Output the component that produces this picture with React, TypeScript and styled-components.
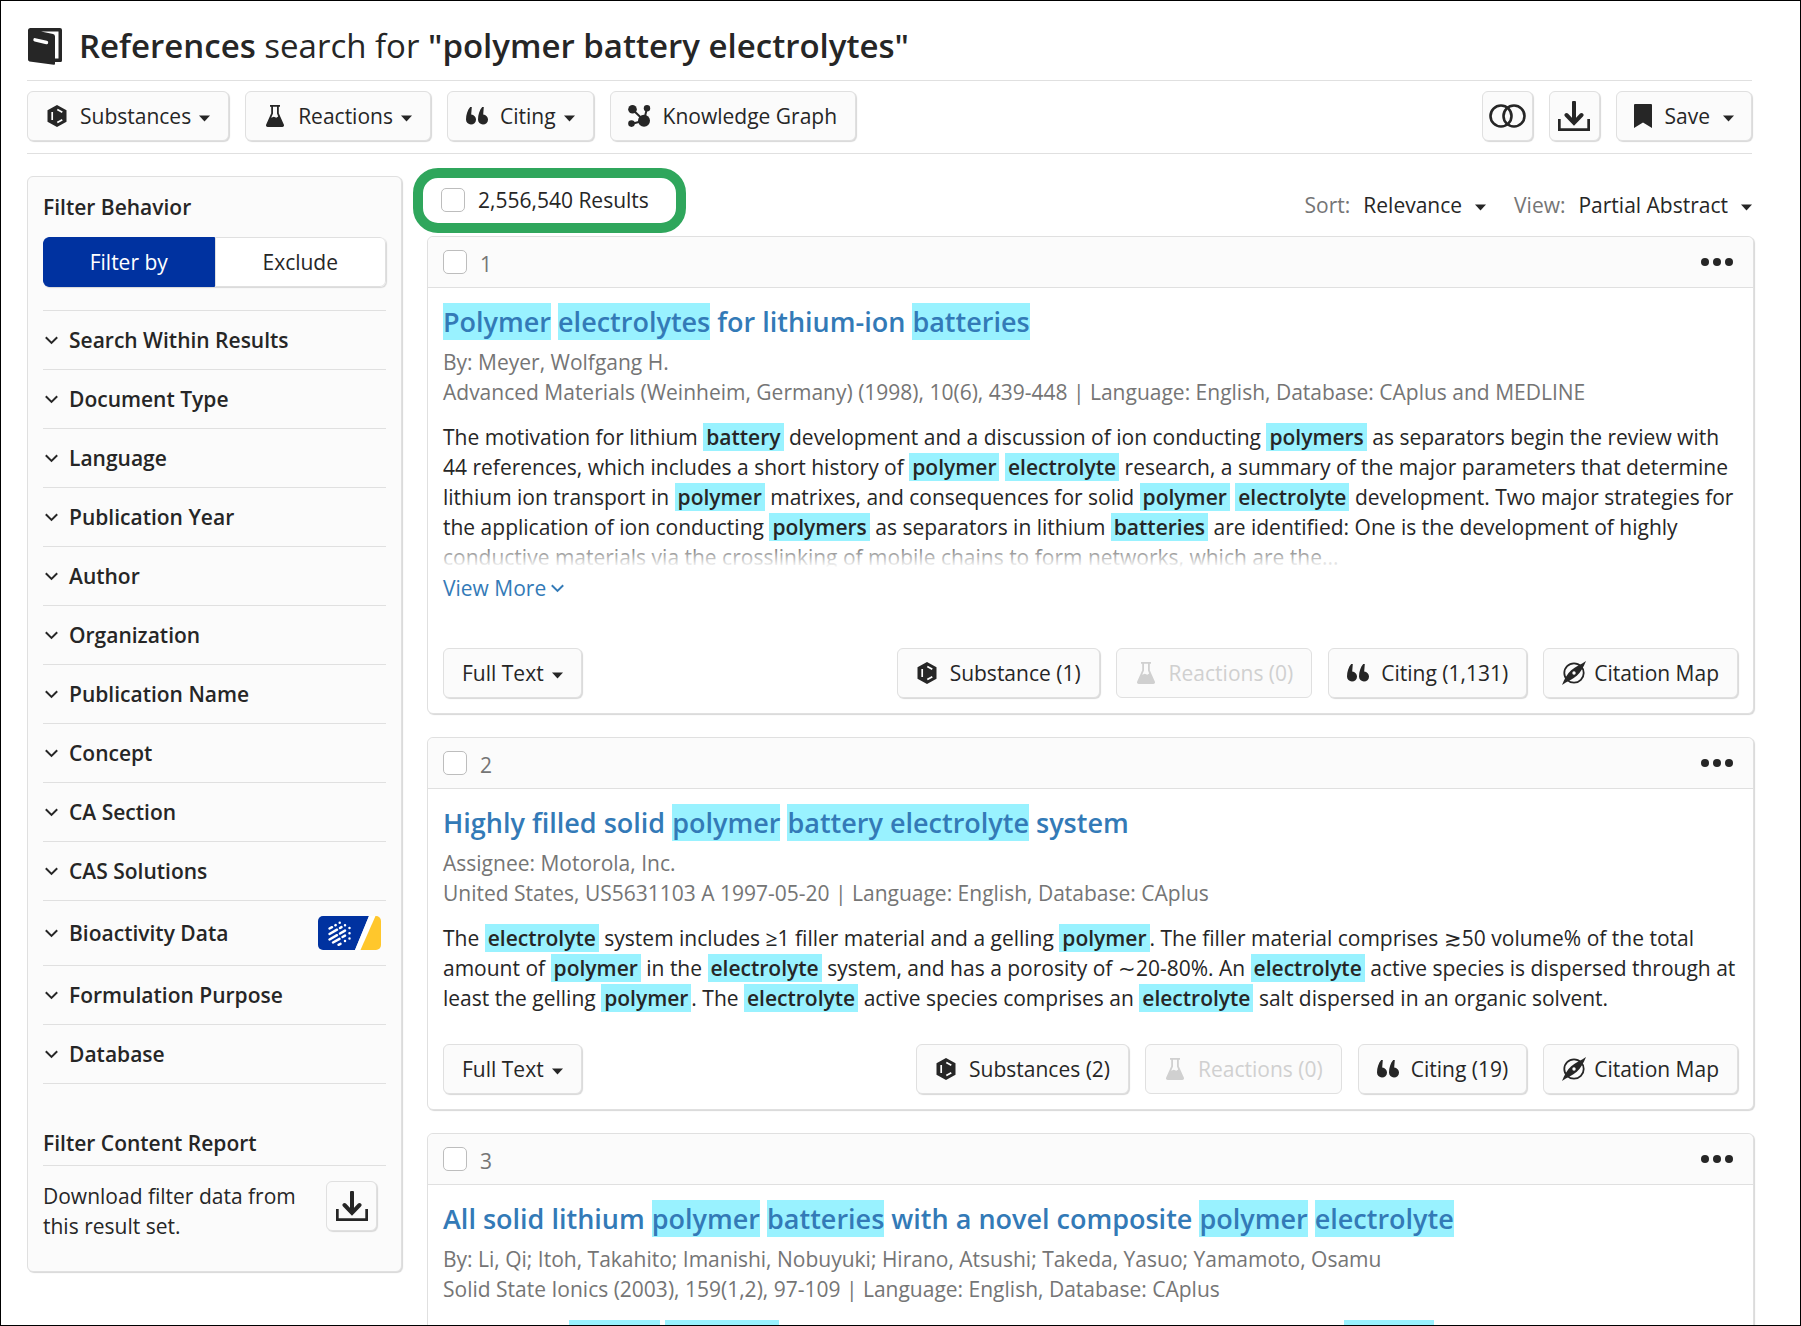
import React, { useState } from "react";
import styled, { createGlobalStyle, css } from "styled-components";

const ink = "#262626";
const muted = "#757575";
const line = "#e0e0e0";
const panel = "#fbfbfb";
const link = "#337ab7";
const brand = "#0032a0";

const GlobalStyle = createGlobalStyle`
  *, *::before, *::after { box-sizing: border-box; }
  body {
    margin: 0;
    background: #fff;
    color: ${ink};
    font: 400 21px/30px "Open Sans", "Noto Sans", sans-serif;
  }
  button, select, input { font: inherit; color: inherit; }
  h1, h2, h3, p, ul { margin: 0; padding: 0; }
  svg { display: block; flex: none; }
`;

const Page = styled.div`
  height: 100vh;
  overflow: hidden;
  border: 1px solid #000;
  padding: 12px 48px 0 26px;
`;

const TitleBar = styled.header`
  display: flex;
  align-items: center;
  gap: 17px;
  height: 68px;
  padding-left: 1px;
  border-bottom: 1px solid ${line};
`;

const Title = styled.h1`
  padding-bottom: 2px;
  font-size: 33px;
  line-height: 44px;
  font-weight: 400;
  strong { font-weight: 600; }
`;

const Toolbar = styled.div`
  display: flex;
  align-items: center;
  gap: 16px;
  height: 73px;
  padding-bottom: 2px;
  border-bottom: 1px solid ${line};
`;

const Spacer = styled.span`
  flex: 1;
`;

const Button = styled.button<{ $square?: boolean; $roomy?: boolean }>`
  display: inline-flex;
  align-items: center;
  justify-content: center;
  gap: ${(p) => (p.$roomy ? 13 : 8)}px;
  height: 50px;
  padding: 0 ${(p) => (p.$roomy ? 17 : 18)}px;
  border: 1px solid ${line};
  border-radius: 6px;
  background: ${panel};
  box-shadow: 1px 1px 1px #d8d8d8;
  white-space: nowrap;
  ${(p) => p.$square && css`width: 51px; padding: 0; flex: none;`}
  &:disabled {
    color: #d0d0d0;
    box-shadow: none;
  }
`;

const ButtonIcon = styled.span`
  display: inline-flex;
  justify-content: center;
  width: 22px;
  margin-right: 4px;
`;

const Columns = styled.div`
  display: grid;
  grid-template-columns: 375px minmax(0, 1fr);
  column-gap: 25px;
  align-items: start;
  margin-right: -2px;
  padding-top: 22px;
`;

const Sidebar = styled.aside`
  padding: 15px;
  border: 1px solid ${line};
  border-radius: 6px;
  background: ${panel};
  box-shadow: 1px 1px 1px #d8d8d8;
`;

const SideHeading = styled.h2`
  font-size: 21px;
  line-height: 30px;
  font-weight: 600;
`;

const Toggle = styled.div`
  display: grid;
  grid-template-columns: 1fr 1fr;
  height: 50px;
  margin: 15px 0 23px;
  border-radius: 6px;
  overflow: hidden;
  box-shadow: 1px 1px 1px #d8d8d8;
`;

const ToggleButton = styled.button<{ $on: boolean }>`
  border: 1px solid ${(p) => (p.$on ? brand : line)};
  border-radius: ${(p) => (p.$on ? "6px 0 0 6px" : "0 6px 6px 0")};
  background: ${(p) => (p.$on ? brand : "#fff")};
  color: ${(p) => (p.$on ? "#fff" : ink)};
`;

const FilterList = styled.ul`
  list-style: none;
  border-top: 1px solid ${line};
`;

const FilterItem = styled.li`
  border-bottom: 1px solid ${line};
`;

const FilterButton = styled.button`
  display: flex;
  align-items: center;
  gap: 11px;
  width: 100%;
  padding: 14px 5px 14px 2px;
  border: 0;
  background: none;
  font-weight: 600;
  text-align: left;
`;

const FilterName = styled.span`
  flex: 1;
`;

const Report = styled.section`
  margin-top: 44px;
  padding-bottom: 15px;
`;

const ReportTitle = styled(SideHeading)`
  padding-bottom: 7px;
  border-bottom: 1px solid ${line};
`;

const ReportBody = styled.div`
  display: flex;
  justify-content: space-between;
  align-items: flex-start;
  padding: 15px 9px 0 0;
`;

const Main = styled.main`
  display: flex;
  flex-direction: column;
`;

const ResultsBar = styled.div`
  position: relative;
  display: flex;
  align-items: center;
  height: 60px;
  padding: 0 2px 12px 14px;
`;

const Callout = styled.span`
  position: absolute;
  left: -14px;
  top: -8px;
  width: 273px;
  height: 65px;
  border: 10px solid #2fa65c;
  border-radius: 25px;
  pointer-events: none;
`;

const CheckLabel = styled.label`
  display: inline-flex;
  align-items: center;
  gap: 13px;
`;

const RowNumber = styled.span`
  padding-top: 4px;
  color: ${muted};
`;

const Check = styled.input.attrs({ type: "checkbox" })`
  appearance: none;
  width: 24px;
  height: 24px;
  margin: 0;
  border: 1px solid #bdbdbd;
  border-radius: 5px;
  background: #fff;
  &:checked { background: ${brand}; }
`;

const Field = styled.label`
  display: inline-flex;
  align-items: center;
  gap: 13px;
  margin-left: 28px;
  padding-top: 10px;
  color: ${muted};
`;

const SelectWrap = styled.span`
  display: inline-flex;
  align-items: center;
  gap: 13px;
  color: ${ink};
`;

const Select = styled.select`
  appearance: none;
  field-sizing: content;
  padding: 0;
  border: 0;
  background: none;
`;

const Card = styled.article`
  margin-bottom: 23px;
  border: 1px solid ${line};
  border-radius: 6px;
  background: #fff;
  box-shadow: 1px 1px 1px #d8d8d8;
`;

const CardHead = styled.div`
  display: flex;
  align-items: center;
  justify-content: space-between;
  height: 51px;
  padding: 0 20px 0 15px;
  border-bottom: 1px solid ${line};
  border-radius: 6px 6px 0 0;
  background: ${panel};
`;

const MoreButton = styled.button`
  padding: 8px 0;
  border: 0;
  background: none;
`;

const CardBody = styled.div`
  padding: 15px;
`;

const CardTitle = styled.h3`
  margin-bottom: 7px;
  font-size: 27px;
  line-height: 37px;
  font-weight: 600;
  a { color: ${link}; text-decoration: none; }
  mark { background: #99f2ff; color: inherit; }
`;

const Meta = styled.p`
  color: ${muted};
`;

const Abstract = styled.p<{ $faded?: boolean }>`
  position: relative;
  margin-top: 15px;
  mark {
    padding: 0 3px;
    background: #99f2ff;
    color: inherit;
    font-weight: 600;
  }
  ${(p) => p.$faded && css`
    &::after {
      content: "";
      position: absolute;
      inset: auto 0 0 0;
      height: 30px;
      background: linear-gradient(rgba(255, 255, 255, 0.2), #fff 85%);
    }
  `}
`;

const ViewMore = styled.a`
  display: flex;
  align-items: center;
  gap: 5px;
  width: fit-content;
  margin-top: 1px;
  color: ${link};
  text-decoration: none;
`;

const Actions = styled.div<{ $loose?: boolean }>`
  display: flex;
  gap: 16px;
  margin-top: ${(p) => (p.$loose ? 45 : 31)}px;
`;

const CaretSvg = styled.svg`
  margin-top: 4px;
`;

const Caret = () => (
  <CaretSvg width="11" height="7" viewBox="0 0 11 7" fill="currentColor" aria-hidden="true">
    <path d="M0 .5h11L5.500 6.500z" />
  </CaretSvg>
);

const Chevron = () => (
  <svg width="13" height="13" viewBox="0 0 13 13" fill="none" stroke="currentColor" strokeWidth="2" aria-hidden="true">
    <path d="M.8 3.300l5.700 5.600 5.700-5.600" />
  </svg>
);

const BookIcon = () => (
  <svg width="34" height="37" viewBox="0 0 34 37" aria-hidden="true">
    <path d="M2.500 0H32a2 2 0 0 1 2 2v30.500a1.500 1.500 0 0 1-1.500 1.500H27v1.700a1 1 0 0 1-1.200 1L1.500 33.500A2 2 0 0 1 0 31.600V2.500A2.500 2.500 0 0 1 2.500 0z" fill={ink} />
    <path d="M13 3.500h17.500v27H27V8.500a2.500 2.500 0 0 0-2-2.400z" fill="#fff" />
    <path d="m7 11.800 11.500 2.700" stroke="#fff" strokeWidth="3.400" strokeLinecap="round" />
  </svg>
);

const SubstanceIcon = () => (
  <svg width="20" height="22" viewBox="0 0 20 22" aria-hidden="true">
    <path d="M10 0l9.500 5.300v11.400L10 22 .5 16.700V5.300z" fill="currentColor" />
    <path d="M5.200 7v8M10.300 4.400l5 2.900M10.300 17.600l5-2.900" stroke="#fff" strokeWidth="1.700" fill="none" />
  </svg>
);

const FlaskIcon = () => (
  <svg width="18" height="22" viewBox="0 0 18 22" aria-hidden="true">
    <path d="M4 0h10v1.800h-1.200v6.400l5 11.300A1.700 1.700 0 0 1 16.300 22H1.700a1.700 1.700 0 0 1-1.500-2.500l5-11.300V1.800H4zM7 1.800v6.800L5.200 12.800l2.600-1 2.500 1 1.900-1.200L11 8.600V1.800z" fill="currentColor" fillRule="evenodd" />
  </svg>
);

const QuoteIcon = () => (
  <svg width="22" height="18" viewBox="0 0 22 18" fill="currentColor" aria-hidden="true">
    <path d="M4.200 0h1.600L5.200 7.600A5 5 0 1 1 0 12.600C0 8 1.500 3 4.200 0zM16.200 0h1.600l-.6 7.600a5 5 0 1 1-5.200 5C12 8 13.500 3 16.200 0z" />
  </svg>
);

const GraphIcon = () => (
  <svg width="23" height="22" viewBox="0 0 23 22" aria-hidden="true">
    <path d="M4.500 4.500 16 15.500 19 3M16 15.500 3.500 19" stroke="currentColor" strokeWidth="2" fill="none" />
    <g fill="currentColor">
      <circle cx="4.500" cy="4.300" r="4.300" />
      <circle cx="19" cy="3.200" r="3.200" />
      <circle cx="16" cy="15.800" r="6" />
      <circle cx="3.500" cy="18.600" r="3.300" />
    </g>
  </svg>
);

const CirclesIcon = () => (
  <svg width="37" height="24" viewBox="0 0 37 24" fill="none" stroke="currentColor" strokeWidth="2.600" aria-hidden="true">
    <circle cx="12" cy="12" r="10.500" />
    <circle cx="25" cy="12" r="10.500" />
  </svg>
);

const DownloadIcon = () => (
  <svg width="32" height="30" viewBox="0 0 32 30" fill="none" stroke="currentColor" aria-hidden="true">
    <path d="M1.300 18v10.600h29.400V18" strokeWidth="2.800" />
    <path d="M16 1.500V21M8.500 14l7.500 7.800 7.500-7.800" strokeWidth="4" strokeLinecap="round" />
  </svg>
);

const BookmarkIcon = () => (
  <svg width="18" height="24" viewBox="0 0 18 24" fill="currentColor" aria-hidden="true">
    <path d="M1 0h16a1 1 0 0 1 1 1v23l-9-5.500L0 24V1a1 1 0 0 1 1-1z" />
  </svg>
);

const MapIcon = () => (
  <svg width="24" height="24" viewBox="0 0 24 24" aria-hidden="true">
    <circle cx="12" cy="12" r="9.700" fill="none" stroke="currentColor" strokeWidth="1.800" />
    <path d="M24 0C21.500 6.500 18.500 11.500 14.800 14.800 10.500 18.500 5 20.500 0 24 2.500 17.500 5.500 12.500 9.200 9.200 13.500 5.500 19 3.500 24 0z" fill="currentColor" />
    <circle cx="12" cy="12" r="1.700" fill="#fff" />
  </svg>
);

const DotsIcon = () => (
  <svg width="32" height="8" viewBox="0 0 32 8" fill="currentColor" aria-hidden="true">
    <circle cx="4" cy="4" r="4" />
    <circle cx="16" cy="4" r="4" />
    <circle cx="28" cy="4" r="4" />
  </svg>
);

const BioBadge = () => (
  <svg width="63" height="36" viewBox="0 -1 63 36" aria-hidden="true">
    <defs>
      <clipPath id="badge"><rect width="63" height="34" rx="5" /></clipPath>
    </defs>
    <g clipPath="url(#badge)">
      <path d="M0 0h51L37 34H0z" fill={brand} />
      <path d="M51 0h6.500L42.500 34H37z" fill="#fff" />
      <path d="M57.500 0H63v34H42.500z" fill="#ffc72c" />
      <path
        d="M11.500 12.500l2.500-1.300M17.300 9.300l.4-.2M21.700 6.700v.1M11.500 18l7.500-4.300M22 12l1.500-.9M27 9.200v.1M11.500 23.500l7.500-4.300M22 17.500l5-2.900M31.500 12v.1M15 26.500l6.500-3.700M24.500 21l2.500-1.400M31.500 17.200v.1M20.500 28.800l2-1M27 25v.1M31.500 22.500v.1"
        stroke="#fff"
        strokeWidth="2.500"
        strokeLinecap="round"
      />
    </g>
  </svg>
);

const filters = [
  "Search Within Results", "Document Type", "Language", "Publication Year", "Author",
  "Organization", "Publication Name", "Concept", "CA Section", "CAS Solutions",
  "Bioactivity Data", "Formulation Purpose", "Database",
];

/* Text between asterisks is a search hit and is drawn as a <mark>. */
const Marked = ({ text }: { text: string }) => (
  <>{text.split("*").map((part, i) => (i % 2 ? <mark key={i}>{part}</mark> : part))}</>
);

type Result = {
  title: string;
  meta: string[];
  abstract: string;
  partial?: boolean;
  substances: string;
  citing: string;
};

const results: Result[] = [
  {
    title: "*Polymer* *electrolytes* for lithium-ion *batteries*",
    meta: [
      "By: Meyer, Wolfgang H.",
      "Advanced Materials (Weinheim, Germany) (1998), 10(6), 439-448 | Language: English, Database: CAplus and MEDLINE",
    ],
    abstract:
      "The motivation for lithium *battery* development and a discussion of ion conducting *polymers* as separators begin the review with 44 references, which includes a short history of *polymer* *electrolyte* research, a summary of the major parameters that determine lithium ion transport in *polymer* matrixes, and consequences for solid *polymer* *electrolyte* development. Two major strategies for the application of ion conducting *polymers* as separators in lithium *batteries* are identified: One is the development of highly conductive materials via the crosslinking of mobile chains to form networks, which are the...",
    partial: true,
    substances: "Substance (1)",
    citing: "Citing (1,131)",
  },
  {
    title: "Highly filled solid *polymer* *battery electrolyte* system",
    meta: ["Assignee: Motorola, Inc.", "United States, US5631103 A 1997-05-20 | Language: English, Database: CAplus"],
    abstract:
      "The *electrolyte* system includes ≥1 filler material and a gelling *polymer*. The filler material comprises ≳50 volume% of the total amount of *polymer* in the *electrolyte* system, and has a porosity of ∼20-80%. An *electrolyte* active species is dispersed through at least the gelling *polymer*. The *electrolyte* active species comprises an *electrolyte* salt dispersed in an organic solvent.",
    substances: "Substances (2)",
    citing: "Citing (19)",
  },
  {
    title: "All solid lithium *polymer* *batteries* with a novel composite *polymer* *electrolyte*",
    meta: [
      "By: Li, Qi; Itoh, Takahito; Imanishi, Nobuyuki; Hirano, Atsushi; Takeda, Yasuo; Yamamoto, Osamu",
      "Solid State Ionics (2003), 159(1,2), 97-109 | Language: English, Database: CAplus",
    ],
    abstract:
      "A composite *polymer* *electrolyte* was cast from poly(ethylene oxide) and a hyperbranched *polymer* with a lithium salt.",
    substances: "Substances (6)",
    citing: "Citing (58)",
  },
];

const ResultCard = ({ result, index }: { result: Result; index: number }) => (
  <Card>
    <CardHead>
      <CheckLabel>
        <Check />
        <RowNumber>{index}</RowNumber>
      </CheckLabel>
      <MoreButton aria-label="More options"><DotsIcon /></MoreButton>
    </CardHead>
    <CardBody>
      <CardTitle><a href="#reference"><Marked text={result.title} /></a></CardTitle>
      {result.meta.map((m) => <Meta key={m}>{m}</Meta>)}
      <Abstract $faded={result.partial}><Marked text={result.abstract} /></Abstract>
      {result.partial && <ViewMore href="#more">View More<Chevron /></ViewMore>}
      <Actions $loose={result.partial}>
        <Button>Full Text<Caret /></Button>
        <Spacer />
        <Button><ButtonIcon><SubstanceIcon /></ButtonIcon>{result.substances}</Button>
        <Button disabled><ButtonIcon><FlaskIcon /></ButtonIcon>Reactions (0)</Button>
        <Button><ButtonIcon><QuoteIcon /></ButtonIcon>{result.citing}</Button>
        <Button><MapIcon />Citation Map</Button>
      </Actions>
    </CardBody>
  </Card>
);

export default function App() {
  const [exclude, setExclude] = useState(false);
  return (
    <>
      <GlobalStyle />
      <Page>
        <TitleBar>
          <BookIcon />
          <Title><strong>References</strong> search for <strong>"polymer battery electrolytes"</strong></Title>
        </TitleBar>
        <Toolbar>
          <Button><ButtonIcon><SubstanceIcon /></ButtonIcon>Substances<Caret /></Button>
          <Button><ButtonIcon><FlaskIcon /></ButtonIcon>Reactions<Caret /></Button>
          <Button><ButtonIcon><QuoteIcon /></ButtonIcon>Citing<Caret /></Button>
          <Button><ButtonIcon><GraphIcon /></ButtonIcon>Knowledge Graph</Button>
          <Spacer />
          <Button $square aria-label="Combine sets"><CirclesIcon /></Button>
          <Button $square aria-label="Download results"><DownloadIcon /></Button>
          <Button $roomy><BookmarkIcon />Save<Caret /></Button>
        </Toolbar>
        <Columns>
          <Sidebar>
            <SideHeading>Filter Behavior</SideHeading>
            <Toggle>
              <ToggleButton $on={!exclude} aria-pressed={!exclude} onClick={() => setExclude(false)}>Filter by</ToggleButton>
              <ToggleButton $on={exclude} aria-pressed={exclude} onClick={() => setExclude(true)}>Exclude</ToggleButton>
            </Toggle>
            <FilterList>
              {filters.map((name) => (
                <FilterItem key={name}>
                  <FilterButton aria-expanded="false">
                    <Chevron />
                    <FilterName>{name}</FilterName>
                    {name === "Bioactivity Data" && <BioBadge />}
                  </FilterButton>
                </FilterItem>
              ))}
            </FilterList>
            <Report>
              <ReportTitle>Filter Content Report</ReportTitle>
              <ReportBody>
                <p>Download filter data from<br />this result set.</p>
                <Button $square aria-label="Download filter data"><DownloadIcon /></Button>
              </ReportBody>
            </Report>
          </Sidebar>
          <Main>
            <ResultsBar>
              <CheckLabel><Check />2,556,540 Results</CheckLabel>
              <Callout />
              <Spacer />
              <Field>
                Sort:
                <SelectWrap>
                  <Select defaultValue="Relevance"><option>Relevance</option></Select>
                  <Caret />
                </SelectWrap>
              </Field>
              <Field>
                View:
                <SelectWrap>
                  <Select defaultValue="Partial Abstract"><option>Partial Abstract</option></Select>
                  <Caret />
                </SelectWrap>
              </Field>
            </ResultsBar>
            {results.map((r, i) => <ResultCard key={r.title} result={r} index={i + 1} />)}
          </Main>
        </Columns>
      </Page>
    </>
  );
}
